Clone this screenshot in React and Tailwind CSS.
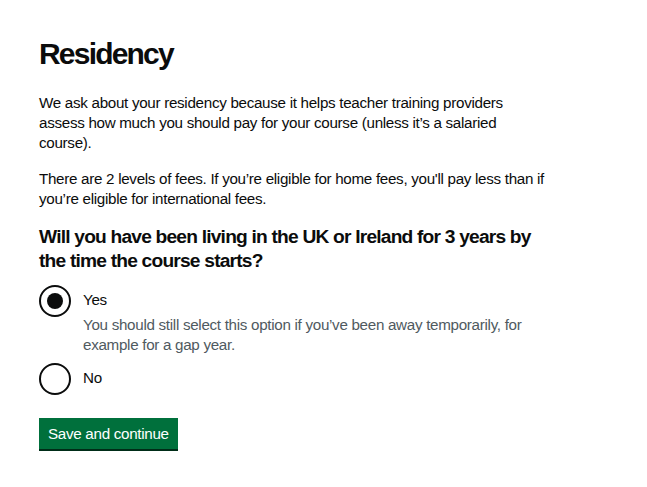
export default function App() {
  return (
    <div className="min-h-screen bg-white text-[#0b0c0c] font-['Liberation_Sans',Arial,sans-serif]">
      <main className="px-[39px] pt-[37px] pb-10 w-[590px]">
        <h1 className="text-[30px] leading-[34px] font-bold tracking-[-1.8px] mb-[22px]">Residency</h1>

        <div className="w-[510px] text-[15.2px] leading-[20px] tracking-[-0.3px]">
          <p className="mb-[16px]">
            We ask about your residency because it helps teacher training providers assess how much you should pay for your course (unless it’s a salaried course).
          </p>
          <p className="mb-[16px]">
            There are 2 levels of fees. If you’re eligible for home fees, you'll pay less than if you’re eligible for international fees.
          </p>
        </div>

        <fieldset>
          <legend className="w-[510px] text-[19.2px] leading-[24px] font-bold tracking-[-0.8px] mb-[12px]">
            Will you have been living in the UK or Ireland for 3 years by the time the course starts?
          </legend>

          <div className="flex flex-col gap-[8px] text-[15.2px] leading-[20px] tracking-[-0.3px]">
            {/* Yes */}
            <div className="flex">
              <div className="w-[32px] h-[32px] rounded-full border-2 border-[#0b0c0c] flex items-center justify-center shrink-0">
                <div className="w-[16px] h-[16px] rounded-full bg-[#0b0c0c]" />
              </div>
              <div className="pl-[12px]">
                <div className="pt-[5px]">Yes</div>
                <div className="text-[#505a5f] mt-[5px] w-[460px]">
                  You should still select this option if you’ve been away temporarily, for example for a gap year.
                </div>
              </div>
            </div>
            {/* No */}
            <div className="flex">
              <div className="w-[32px] h-[32px] rounded-full border-2 border-[#0b0c0c] shrink-0" />
              <div className="pl-[12px] pt-[5px]">No</div>
            </div>
          </div>
        </fieldset>

        <button className="mt-[23px] bg-[#00703c] text-white text-[15.2px] leading-[16px] tracking-[-0.3px] px-[8px] pt-[7px] pb-[6px] border border-transparent shadow-[0_2px_0_#002d18]">
          Save and continue
        </button>
      </main>
    </div>
  );
}
